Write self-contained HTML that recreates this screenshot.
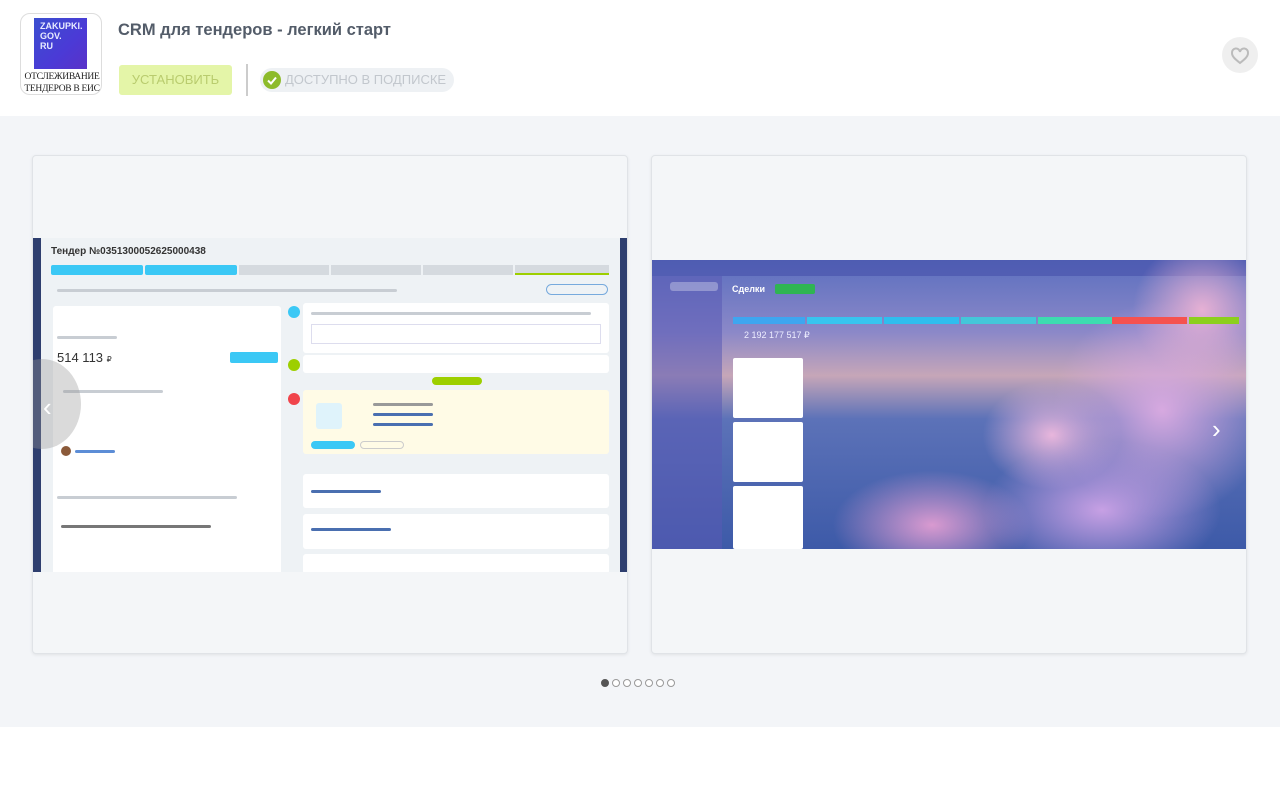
<!DOCTYPE html>
<html><head><meta charset="utf-8">
<style>
*{box-sizing:border-box;margin:0;padding:0}
body{width:1280px;height:785px;background:#fff;font-family:"Liberation Sans","Noto Sans CJK JP",sans-serif;overflow:hidden;position:relative}
.header{position:absolute;left:0;top:0;width:1280px;height:116px;background:#fff;box-shadow:0 2px 4px rgba(0,0,0,.08)}
.logo{position:absolute;left:20px;top:13px;width:82px;height:82px;border:1px solid #ddd;border-radius:10px;background:#fff;overflow:hidden}
.logo .blue{position:absolute;left:13px;top:4px;width:53px;height:51px;background:linear-gradient(135deg,#3b4fd0,#4b3ad6 60%,#5a32c8);color:#e8ecff;font-size:9px;line-height:10px;padding:3px 0 0 6px;font-weight:bold}
.logo .t{position:absolute;left:0;width:82px;text-align:center;font-family:"Liberation Serif",serif;font-size:9.5px;color:#222;letter-spacing:-.3px}
h1{position:absolute;left:118px;top:21px;font-size:16.5px;font-weight:bold;color:#535c69}
.btn{position:absolute;left:119px;top:65px;width:113px;height:30px;background:#e4f5a8;border-radius:3px;color:#b9cc6e;font-size:13px;text-align:center;line-height:30px}
.sep{position:absolute;left:246px;top:64px;width:2px;height:32px;background:#ccc}
.pill{position:absolute;left:260px;top:68px;width:194px;height:24px;background:#eef1f4;border-radius:12px;color:#c2c7cd;font-size:13px;line-height:24px;padding-left:25px;white-space:nowrap}
.pill .ck{position:absolute;left:3px;top:3px;width:18px;height:18px;border-radius:50%;background:#8dbb2b}
.heart{position:absolute;left:1222px;top:37px;width:36px;height:36px;border-radius:50%;background:#efefef}
.gal{position:absolute;left:0;top:116px;width:1280px;height:611px;background:#f3f5f8}
.card{position:absolute;top:155px;width:596px;height:499px;background:#f4f6f8;border:1px solid #e0e3e7;border-radius:4px;box-shadow:0 1px 3px rgba(0,0,0,.08);overflow:hidden}
.s1{position:absolute;left:0;top:82px;width:595px;height:334px;background:#eef2f5;overflow:hidden}
.s2{position:absolute;left:0;top:104px;width:595px;height:289px;overflow:hidden;background:linear-gradient(180deg,#5b6fbf 0%,#8b88c8 25%,#c6a6b8 40%,#5c72b8 55%,#3d5aa8 100%)}
.bar{position:absolute;height:3px;background:#c8cdd3;border-radius:2px}
.dots{position:absolute;top:679px;left:601px;display:flex;gap:3px}
.dots span{width:8px;height:8px;border-radius:50%;border:1px solid #999;background:#fff}
.dots span:first-child{background:#555;border-color:#555}
.w{position:absolute;background:#fff;border-radius:3px}
.fl{position:absolute;border-radius:50%}
</style></head><body>
<div class="header">
 <div class="logo">
  <div class="blue">ZAKUPKI.<br>GOV.<br>RU</div>
  <div class="t" style="top:58px">ОТСЛЕЖИВАНИЕ</div>
  <div class="t" style="top:70px">ТЕНДЕРОВ В ЕИС</div>
 </div>
 <h1>CRM для тендеров - легкий старт</h1>
 <div class="btn">УСТАНОВИТЬ</div>
 <div class="sep"></div>
 <div class="pill"><div class="ck"><svg width="18" height="18"><path d="M5 9.5l3 3 5-6" stroke="#fff" stroke-width="2" fill="none"/></svg></div>ДОСТУПНО В ПОДПИСКЕ</div>
 <div class="heart"><svg width="36" height="36"><path d="M18 26c-5-4-8-6.5-8-10a4 4 0 0 1 8-1a4 4 0 0 1 8 1c0 3.5-3 6-8 10z" stroke="#bbb" stroke-width="2" fill="none"/></svg></div>
</div>
<div class="gal"></div>

<div class="card" style="left:32px">
 <div class="s1">
  <div style="position:absolute;left:0;top:0;width:8px;height:334px;background:#2e3e6e"></div>
  <div style="position:absolute;left:587px;top:0;width:8px;height:334px;background:#2e3e6e"></div>
  <div style="position:absolute;left:18px;top:8px;font-size:10px;font-weight:bold;color:#333">Тендер №0351300052625000438</div>
  <div style="position:absolute;left:18px;top:27px;width:92px;height:10px;background:#3bc8f5;border-radius:2px"></div>
  <div style="position:absolute;left:112px;top:27px;width:92px;height:10px;background:#3bc8f5;border-radius:2px"></div>
  <div style="position:absolute;left:206px;top:27px;width:90px;height:10px;background:#d5dadf"></div>
  <div style="position:absolute;left:298px;top:27px;width:90px;height:10px;background:#d5dadf"></div>
  <div style="position:absolute;left:390px;top:27px;width:90px;height:10px;background:#d5dadf"></div>
  <div style="position:absolute;left:482px;top:27px;width:94px;height:10px;background:#d5dadf;border-bottom:2px solid #9dcf00"></div>
  <div class="bar" style="left:24px;top:51px;width:340px"></div>
  <div style="position:absolute;left:513px;top:46px;width:62px;height:11px;border:1px solid #7ad;border-radius:6px"></div>
  <div class="w" style="left:20px;top:68px;width:228px;height:280px"></div>
  <div style="position:absolute;left:24px;top:112px;font-size:13px;color:#333">514 113 <span style="font-size:8px">₽</span></div>
  <div style="position:absolute;left:197px;top:114px;width:48px;height:11px;background:#3bc8f5;border-radius:2px"></div>
  <div class="bar" style="left:24px;top:98px;width:60px"></div>
  <div class="bar" style="left:30px;top:152px;width:100px"></div>
  <div style="position:absolute;left:28px;top:208px;width:10px;height:10px;border-radius:50%;background:#8b5a3a"></div>
  <div class="bar" style="left:42px;top:212px;width:40px;background:#5c8dd6"></div>
  <div class="bar" style="left:24px;top:258px;width:180px"></div>
  <div class="bar" style="left:28px;top:287px;width:150px;background:#777"></div>
  <div style="position:absolute;left:255px;top:68px;width:12px;height:12px;border-radius:50%;background:#3bc8f5"></div>
  <div class="w" style="left:270px;top:65px;width:306px;height:50px"></div>
  <div class="bar" style="left:278px;top:74px;width:280px"></div>
  <div style="position:absolute;left:278px;top:86px;width:290px;height:20px;border:1px solid #dde"></div>
  <div style="position:absolute;left:255px;top:121px;width:12px;height:12px;border-radius:50%;background:#9dcf00"></div>
  <div class="w" style="left:270px;top:117px;width:306px;height:18px"></div>
  <div style="position:absolute;left:399px;top:139px;width:50px;height:8px;background:#9dcf00;border-radius:4px"></div>
  <div style="position:absolute;left:255px;top:155px;width:12px;height:12px;border-radius:50%;background:#f0444b"></div>
  <div style="position:absolute;left:270px;top:152px;width:306px;height:64px;background:#fffbe6;border-radius:3px"></div>
  <div style="position:absolute;left:283px;top:165px;width:26px;height:26px;background:#dff3fb;border-radius:3px"></div>
  <div style="position:absolute;left:278px;top:203px;width:44px;height:8px;background:#3bc8f5;border-radius:4px"></div>
  <div style="position:absolute;left:327px;top:203px;width:44px;height:8px;border:1px solid #ccc;border-radius:4px"></div>
  <div class="bar" style="left:340px;top:165px;width:60px;background:#999"></div>
  <div class="bar" style="left:340px;top:175px;width:60px;background:#4a6fb0"></div>
  <div class="bar" style="left:340px;top:185px;width:60px;background:#4a6fb0"></div>
  <div class="w" style="left:270px;top:236px;width:306px;height:34px"></div>
  <div class="bar" style="left:278px;top:252px;width:70px;background:#4a6fb0"></div>
  <div class="w" style="left:270px;top:276px;width:306px;height:35px"></div>
  <div class="bar" style="left:278px;top:290px;width:80px;background:#4a6fb0"></div>
  <div class="w" style="left:270px;top:316px;width:306px;height:20px"></div>
 </div>
 <div style="position:absolute;left:-30px;top:203px;width:78px;height:90px;border-radius:50%;background:rgba(150,150,150,.35)"></div>
 <div style="position:absolute;left:10px;top:236px;color:#fff;font-size:26px">‹</div>
</div>

<div class="card" style="left:651px">
 <div class="s2">
  <div style="position:absolute;left:0;top:0;width:595px;height:16px;background:rgba(70,80,170,.6)"></div>
  <div style="position:absolute;left:0;top:16px;width:70px;height:273px;background:rgba(90,90,180,.55)"></div>
  <div style="position:absolute;left:18px;top:22px;width:48px;height:9px;border-radius:3px;background:rgba(255,255,255,.3)"></div>
  <div style="position:absolute;left:80px;top:24px;color:#fff;font-size:9px;font-weight:bold">Сделки</div>
  <div style="position:absolute;left:123px;top:24px;width:40px;height:10px;background:#2fb552;border-radius:2px"></div>
  <div class="fl" style="left:330px;top:120px;width:140px;height:110px;background:radial-gradient(#e8b6dc,rgba(200,140,200,0) 70%)"></div>
  <div class="fl" style="left:400px;top:40px;width:220px;height:220px;background:radial-gradient(#d7a9e0,rgba(180,130,210,0) 70%)"></div>
  <div class="fl" style="left:180px;top:210px;width:200px;height:110px;background:radial-gradient(#d99ad0,rgba(200,120,190,0) 70%)"></div>
  <div class="fl" style="left:330px;top:180px;width:240px;height:140px;background:radial-gradient(#c7a0e4,rgba(170,130,220,0) 70%)"></div>
  <div class="fl" style="left:480px;top:-20px;width:140px;height:140px;background:radial-gradient(#e6b0d4,rgba(220,150,200,0) 70%)"></div>
  <div style="position:absolute;left:81px;top:57px;width:72px;height:7px;background:#3ea6f0"></div>
  <div style="position:absolute;left:155px;top:57px;width:75px;height:7px;background:#38c4ef"></div>
  <div style="position:absolute;left:232px;top:57px;width:75px;height:7px;background:#2fbdee"></div>
  <div style="position:absolute;left:309px;top:57px;width:75px;height:7px;background:#44c6d9"></div>
  <div style="position:absolute;left:386px;top:57px;width:75px;height:7px;background:#3ddcb0"></div>
  <div style="position:absolute;left:460px;top:57px;width:75px;height:7px;background:#f5524f"></div>
  <div style="position:absolute;left:537px;top:57px;width:50px;height:7px;background:#8ccf1d"></div>
  <div style="position:absolute;left:92px;top:70px;color:#eef;font-size:9px">2 192 177 517 ₽</div>
  <div class="w" style="left:81px;top:98px;width:70px;height:60px;border-radius:2px"></div>
  <div class="w" style="left:81px;top:162px;width:70px;height:60px;border-radius:2px"></div>
  <div class="w" style="left:81px;top:226px;width:70px;height:63px;border-radius:2px"></div>
 </div>
 <div style="position:absolute;left:560px;top:258px;color:#fff;font-size:26px">›</div>
</div>

<div class="dots"><span></span><span></span><span></span><span></span><span></span><span></span><span></span></div>
</body></html>
